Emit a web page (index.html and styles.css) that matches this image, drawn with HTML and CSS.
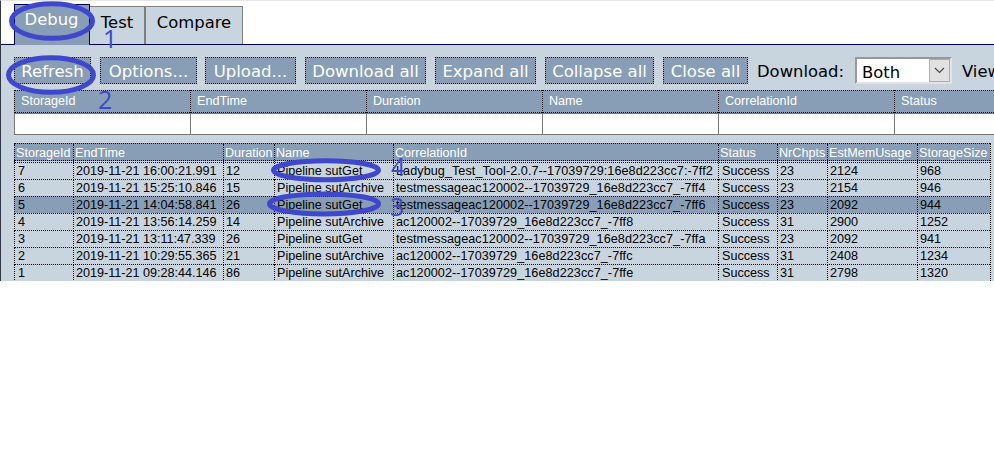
FILE: index.html
```html
<!DOCTYPE html>
<html lang="en">
<head>
<meta charset="utf-8">
<title>Ladybug Debug</title>
<link rel="stylesheet" href="styles.css">
</head>
<body>
<main class="app">
<nav class="tabs"><a class="tab active"><span>Debug</span></a><a class="tab test"><span>Test</span></a><a class="tab compare"><span>Compare</span></a></nav>
<section class="panel">
<div class="toolbar">
<button class="w1"><span>Refresh</span></button><button class="w2"><span>Options...</span></button><button class="w3"><span>Upload...</span></button><button class="w4"><span>Download all</span></button><button class="w5"><span>Expand all</span></button><button class="w6"><span>Collapse all</span></button><button class="w7"><span>Close all</span></button>
<label class="dl">Download:</label>
<div class="select"><span>Both</span><i><svg width="11" height="7" viewBox="0 0 11 7"><path d="M1 1l4.5 4.5L10 1" fill="none" stroke="#444" stroke-width="1.1"/></svg></i></div>
<label class="view">View</label>
</div>
<div class="filters">
<div class="filter"><b>StorageId</b><p></p></div><div class="filter"><b>EndTime</b><p></p></div><div class="filter"><b>Duration</b><p></p></div><div class="filter"><b>Name</b><p></p></div><div class="filter"><b>CorrelationId</b><p></p></div><div class="filter"><b>Status</b><p></p></div>
</div>
<div class="reports">
<div class="row head"><span>StorageId</span><span>EndTime</span><span>Duration</span><span>Name</span><span>CorrelationId</span><span>Status</span><span>NrChpts</span><span>EstMemUsage</span><span>StorageSize</span></div>
<div class="row"><span>7</span><span>2019-11-21 16:00:21.991</span><span>12</span><span>Pipeline sutGet</span><span>Ladybug_Test_Tool-2.0.7--17039729:16e8d223cc7:-7ff2</span><span>Success</span><span>23</span><span>2124</span><span>968</span></div>
<div class="row"><span>6</span><span>2019-11-21 15:25:10.846</span><span>15</span><span>Pipeline sutArchive</span><span>testmessageac120002--17039729_16e8d223cc7_-7ff4</span><span>Success</span><span>23</span><span>2154</span><span>946</span></div>
<div class="row selected"><span>5</span><span>2019-11-21 14:04:58.841</span><span>26</span><span>Pipeline sutGet</span><span>testmessageac120002--17039729_16e8d223cc7_-7ff6</span><span>Success</span><span>23</span><span>2092</span><span>944</span></div>
<div class="row"><span>4</span><span>2019-11-21 13:56:14.259</span><span>14</span><span>Pipeline sutArchive</span><span>ac120002--17039729_16e8d223cc7_-7ff8</span><span>Success</span><span>31</span><span>2900</span><span>1252</span></div>
<div class="row"><span>3</span><span>2019-11-21 13:11:47.339</span><span>26</span><span>Pipeline sutGet</span><span>testmessageac120002--17039729_16e8d223cc7_-7ffa</span><span>Success</span><span>23</span><span>2092</span><span>941</span></div>
<div class="row"><span>2</span><span>2019-11-21 10:29:55.365</span><span>21</span><span>Pipeline sutArchive</span><span>ac120002--17039729_16e8d223cc7_-7ffc</span><span>Success</span><span>31</span><span>2408</span><span>1234</span></div>
<div class="row"><span>1</span><span>2019-11-21 09:28:44.146</span><span>86</span><span>Pipeline sutArchive</span><span>ac120002--17039729_16e8d223cc7_-7ffe</span><span>Success</span><span>31</span><span>2798</span><span>1320</span></div>
</div>
</section>
</main>
<svg class="marks" width="994" height="281" viewBox="0 0 994 281">
<g fill="none" stroke="#3f48cc" stroke-width="5"><ellipse cx="52" cy="21" rx="40.5" ry="17.3"/><ellipse cx="51" cy="75" rx="42.5" ry="17.3"/><ellipse cx="326" cy="170.3" rx="52.5" ry="9.5"/><ellipse cx="324" cy="203.9" rx="54.5" ry="10"/></g>
<g class="marknum"><text x="103" y="48">1</text><text x="98" y="109">2</text><text x="390" y="216">3</text><text x="391" y="176">4</text></g>
</svg>
</body>
</html>
```

FILE: styles.css
```css
* { box-sizing: border-box; }
body { margin: 0; background: #fff; overflow: hidden; }
.app { width: 994px; height: 281px; overflow: hidden; border-left: 1px solid #303848; border-top: 1px solid #e6e6e6; font-family: "DejaVu Sans", sans-serif; font-size: 16.4px; }
.tabs { display: flex; height: 43px; padding-left: 13px; align-items: flex-end; }
.tab { display: flex; justify-content: center; height: 38px; line-height: 31px; background: #c8d4de; border: 1px solid #808080; border-bottom: 0; color: #000; }
.active { position: relative; width: 76px; height: 41px; line-height: 30px; background: #889eb6; border-color: #000050; color: #fff; margin-bottom: -1px; padding-right: 1px; }
.test { width: 55px; border-left: 0; }
.compare { width: 98px; }
.panel { height: 237px; background: #c8d4de; border-top: 1px solid #000050; padding: 12px 0 0 13px; }
.toolbar { display: flex; width: 1010px; height: 27px; gap: 9px; }
button { display: flex; justify-content: center; align-items: center; height: 27px; padding: 0; background: #889eb6; border: 1px dotted #000; color: #fff; font: 16.5px "DejaVu Sans", sans-serif; flex: none; }
button span { white-space: nowrap; position: relative; top: 1px; }
.w1 { width: 77px; } .w2 { width: 97px; margin-right: -1px; } .w3 { width: 91px; } .w4 { width: 121px; } .w5 { width: 101px; } .w6 { width: 109px; } .w7 { width: 85px; }
.dl { width: 89px; line-height: 30px; flex: none; }
.select { display: flex; flex: none; width: 97px; height: 27px; background: #fff; border: 2px solid #999; border-right-color: #e3e3e3; border-bottom-color: #e3e3e3; justify-content: space-between; line-height: 27px; padding-left: 5px; }
.select i { display: flex; width: 21px; height: 23px; align-items: center; justify-content: center; background: #e1e1e1; border: 1px solid #adadad; }
.view { line-height: 30px; padding-left: 1px; }
.filters { display: grid; grid-template-columns: repeat(6, 176px); margin-top: 6px; height: 45px; font: 12.6px "Liberation Sans", sans-serif; }
.filter b { display: block; height: 23px; background: #889eb6; color: #fff; border: 1px dotted #000; border-right: 0; font-weight: 400; line-height: 21px; padding-left: 6px; }
.filter p { margin: 0; height: 22px; background: #fff; border: 1px solid #777; border-right: 0; }
.reports { width: 977px; margin-top: 8px; font: 12.6px "Liberation Sans", sans-serif; border-right: 1px dotted #000; }
.row { display: grid; grid-template-columns: 59px 150px 51px 119px 325px 59px 50px 90px 73px; height: 17px; line-height: 17px; color: #000; border-top: 1px dotted #000; }
.row span { padding-left: 2px; border-left: 1px dotted #000; white-space: nowrap; }
.row span:first-child, .row span:nth-child(6) { padding-left: 3px; }
.row span:nth-child(5) { letter-spacing: .08px; }
.head { height: 18px; line-height: 18px; background: #889eb6; color: #fff; border-bottom: 1px dotted #000; margin-bottom: 1px; }
.row.head span { padding-left: 1px; letter-spacing: 0; }
.selected { background: #889eb6; }
.marks { position: absolute; left: 0; top: 0; }
.marknum { font: 25px "Open Sans", sans-serif; fill: #3f48cc; }
```
